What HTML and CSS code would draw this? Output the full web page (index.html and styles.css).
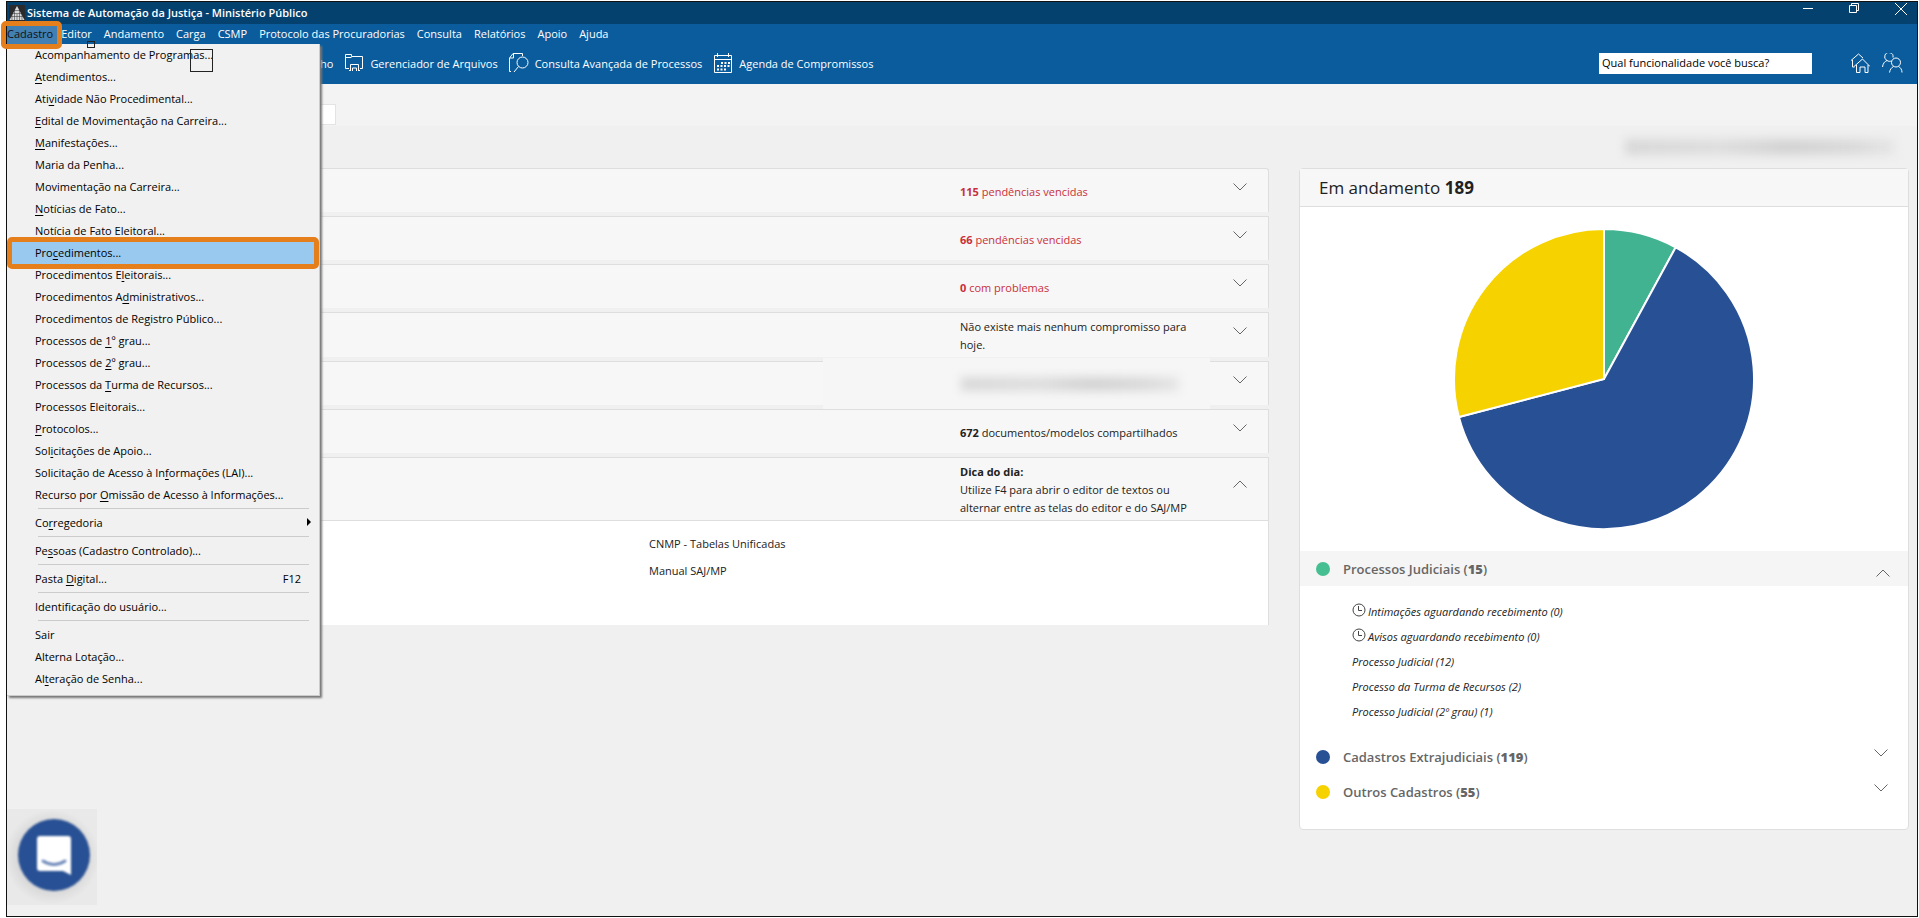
FILE: index.html
```html
<!DOCTYPE html>
<html lang="pt-BR">
<head>
    <meta charset="UTF-8">
    <meta name="viewport" content="width=device-width, initial-scale=1.0">
    <title>Sistema de Automação da Justiça - Ministério Público</title>
    <link rel="stylesheet" href="styles.css">
</head>
<body>
    <div class="window">
        <header class="titlebar">
            <svg class="logo" width="16" height="16" viewBox="0 0 16 16">
                <rect width="16" height="16" fill="#2b2b2e"/>
                <path d="M8 1L15.500 15H.5z" fill="#d8d8d8"/>
                <path d="M3 5.500h10M3 8.500h10M1 11.500h14M5.500 2v13M8 9v6M10.500 2v13M13 2v13M3 2v13" stroke="#2b2b2e" stroke-width=".5"/>
            </svg>
            <h1>Sistema de Automação da Justiça - Ministério Público</h1>
            <div class="window-buttons">
                <button aria-label="Minimizar"><svg width="12" height="14" viewBox="0 0 12 14"><path d="M1 6.500h10"/></svg></button>
                <button aria-label="Restaurar"><svg width="12" height="14" viewBox="0 0 12 14"><path d="M1.500 3.500h7v7h-7zM3.500 3.500v-2h7v7h-2"/></svg></button>
                <button aria-label="Fechar"><svg width="14" height="14" viewBox="0 0 14 14"><path d="M1 1l12 12M13 1L1 13"/></svg></button>
            </div>
        </header>

        <nav class="menubar">
            <div class="menu-root">
                <button class="active">Cadastro</button>
                <span class="mark mark-root"></span>
                <span class="handle handle-small"></span>
                <span class="handle handle-large"></span>
                <ul class="dropdown">
                    <li><button>Acompanhamento de Programas...</button></li>
                    <li><button><u>A</u>tendimentos...</button></li>
                    <li><button>Ati<u>v</u>idade Não Procedimental...</button></li>
                    <li><button><u>E</u>dital de Movimentação na Carreira...</button></li>
                    <li><button><u>M</u>anifestações...</button></li>
                    <li><button>Maria da Penha...</button></li>
                    <li><button>Movimentação na Carreira...</button></li>
                    <li><button><u>N</u>otícias de Fato...</button></li>
                    <li><button>Notícia de Fato <u>E</u>leitoral...</button></li>
                    <li class="selected"><button>Pro<u>c</u>edimentos...</button><span class="mark mark-item"></span></li>
                    <li><button>Procedimentos E<u>l</u>eitorais...</button></li>
                    <li><button>Procedimentos A<u>d</u>ministrativos...</button></li>
                    <li><button>Procedimentos de Re<u>g</u>istro Público...</button></li>
                    <li><button>Processos de <u>1</u>º grau...</button></li>
                    <li><button>Processos de <u>2</u>º grau...</button></li>
                    <li><button>Processos da <u>T</u>urma de Recursos...</button></li>
                    <li><button>Processos Eleitorais...</button></li>
                    <li><button><u>P</u>rotocolos...</button></li>
                    <li><button>Sol<u>i</u>citações de Apoio...</button></li>
                    <li><button>Solicitação de Acesso à In<u>f</u>ormações (LAI)...</button></li>
                    <li><button>Recurso por <u>O</u>missão de Acesso à Informações...</button></li>
                    <li class="separator"></li>
                    <li><button>Co<u>r</u>regedoria <svg class="submenu" width="4" height="8" viewBox="0 0 4 8"><path d="M0 0l4 4-4 4z"/></svg></button></li>
                    <li class="separator"></li>
                    <li><button>Pe<u>s</u>soas (Cadastro Controlado)...</button></li>
                    <li class="separator"></li>
                    <li><button>Pasta <u>D</u>igital... <span class="shortcut">F12</span></button></li>
                    <li class="separator"></li>
                    <li><button>Identificação do usuário...</button></li>
                    <li class="separator"></li>
                    <li><button>Sair</button></li>
                    <li><button>Alterna Lotação...</button></li>
                    <li><button>Al<u>t</u>eração de Senha...</button></li>
                </ul>
            </div>
            <button>Editor</button>
            <button>Andamento</button>
            <button>Carga</button>
            <button>CSMP</button>
            <button>Protocolo das Procuradorias</button>
            <button>Consulta</button>
            <button>Relatórios</button>
            <button>Apoio</button>
            <button>Ajuda</button>
        </nav>

        <div class="toolbar">
            <button>ho</button>
            <button>
                <svg width="20" height="20" viewBox="0 0 20 20"><path d="M5 15.500H1.500V1.500h6v2h11v12H16M1.500 4.500h6M6.500 18V11.500h8V18M8.500 18v-3h4v3M5 17.500h2M14 17.500h2"/></svg>
                Gerenciador de Arquivos
            </button>
            <button>
                <svg width="20" height="20" viewBox="0 0 20 20"><path d="M2 18.500H.5V5L4 .5h9.500V3M4.500 1v4H1"/><circle cx="13.500" cy="9.500" r="5.500"/><path d="M9.500 13.500L5 19"/></svg>
                Consulta Avançada de Processos
            </button>
            <button>
                <svg width="20" height="20" viewBox="0 0 20 20"><path d="M1.500 2.500h17v17h-17zM1.500 6.500h17M4.500 0v4M15.500 0v4"/><path d="M8 10h9M4 13h13M4 16.500h9" stroke-width="2" stroke-dasharray="2 1.500"/></svg>
                Agenda de Compromissos
            </button>
            <div class="toolbar-right">
                <input type="text" aria-label="Busca de funcionalidade" value="Qual funcionalidade você busca?">
                <button aria-label="Início"><svg width="20" height="20" viewBox="0 0 20 20"><path d="M1 7.500L8.500 1 13 5M2.500 7v7h2M4 13.500L12.500 6 20 13.500M6.500 12v7.500h3.500V14h5v5.500h3V12"/></svg></button>
                <button aria-label="Usuários"><svg width="21" height="20" viewBox="0 0 21 20"><circle cx="14" cy="9.500" r="4.500"/><path d="M7.500 19.500c.500-3 2-5 4-6M16.500 13.500c2 1 3.500 3 3.500 6M11 4.500A4.200 4.200 0 1 0 5 7.500M5 7.500C2.500 8.500 1 10.500.5 14M5 7.500c1.500 1 3 1 4.500.500"/></svg></button>
            </div>
        </div>

        <div class="subbar">
            <input type="text" aria-label="Lotação">
        </div>
        <div class="userline"><span class="redacted redacted-user"></span></div>

        <main class="content">
            <section class="panel">
                <div class="row alert">
                    <p><b>115</b> pendências vencidas</p>
                    <button aria-label="Expandir"><svg class="chevron" width="14" height="8" viewBox="0 0 14 8"><path d="M.5.5L7 7 13.500.5"/></svg></button>
                </div>
                <div class="row alert">
                    <p><b>66</b> pendências vencidas</p>
                    <button aria-label="Expandir"><svg class="chevron" width="14" height="8" viewBox="0 0 14 8"><path d="M.5.5L7 7 13.500.5"/></svg></button>
                </div>
                <div class="row alert">
                    <p><b>0</b> com problemas</p>
                    <button aria-label="Expandir"><svg class="chevron" width="14" height="8" viewBox="0 0 14 8"><path d="M.5.5L7 7 13.500.5"/></svg></button>
                </div>
                <div class="row">
                    <p>Não existe mais nenhum compromisso para hoje.</p>
                    <button aria-label="Expandir"><svg class="chevron" width="14" height="8" viewBox="0 0 14 8"><path d="M.5.5L7 7 13.500.5"/></svg></button>
                </div>
                <div class="row">
                    <div class="redacted-box"><span class="redacted"></span></div>
                    <button aria-label="Expandir"><svg class="chevron" width="14" height="8" viewBox="0 0 14 8"><path d="M.5.5L7 7 13.500.5"/></svg></button>
                </div>
                <div class="row">
                    <p><b>672</b> documentos/modelos compartilhados</p>
                    <button aria-label="Expandir"><svg class="chevron" width="14" height="8" viewBox="0 0 14 8"><path d="M.5.5L7 7 13.500.5"/></svg></button>
                </div>
                <div class="row open">
                    <p><b>Dica do dia:</b><br>Utilize F4 para abrir o editor de textos ou alternar entre as telas do editor e do SAJ/MP</p>
                    <button aria-label="Recolher"><svg class="chevron" width="14" height="8" viewBox="0 0 14 8"><path d="M.5 7.500L7 1l6.500 6.500"/></svg></button>
                </div>
                <div class="links">
                    <a href="#">CNMP - Tabelas Unificadas</a>
                    <a href="#">Manual SAJ/MP</a>
                </div>
            </section>

            <section class="card">
                <h2>Em andamento <b>189</b></h2>
                <svg class="pie" width="300" height="300" viewBox="-150 -150 300 300">
                    <path fill="#41b391" d="M0 0V-150A150 150 0 0 1 71.700-131.700z"/>
                    <path fill="#285094" d="M0 0L71.700-131.700A150 150 0 1 1-145.100 38z"/>
                    <path fill="#f5d200" d="M0 0L-145.100 38A150 150 0 0 1 0-150z"/>
                </svg>
                <div class="group expanded">
                    <span class="dot green"></span>
                    <h3>Processos Judiciais (<b>15</b>)</h3>
                    <button aria-label="Recolher"><svg class="chevron" width="14" height="8" viewBox="0 0 14 8"><path d="M.5 7.500L7 1l6.500 6.500"/></svg></button>
                </div>
                <ul class="processes">
                    <li><svg width="14" height="14" viewBox="0 0 14 14"><circle cx="7" cy="7" r="6"/><path d="M6.500 3v4.500H10"/></svg><a href="#">Intimações aguardando recebimento (0)</a></li>
                    <li><svg width="14" height="14" viewBox="0 0 14 14"><circle cx="7" cy="7" r="6"/><path d="M6.500 3v4.500H10"/></svg><a href="#">Avisos aguardando recebimento (0)</a></li>
                    <li><a href="#">Processo Judicial (12)</a></li>
                    <li><a href="#">Processo da Turma de Recursos (2)</a></li>
                    <li><a href="#">Processo Judicial (2º grau) (1)</a></li>
                </ul>
                <div class="group">
                    <span class="dot blue"></span>
                    <h3>Cadastros Extrajudiciais (<b>119</b>)</h3>
                    <button aria-label="Expandir"><svg class="chevron" width="14" height="8" viewBox="0 0 14 8"><path d="M.5.5L7 7 13.500.5"/></svg></button>
                </div>
                <div class="group">
                    <span class="dot yellow"></span>
                    <h3>Outros Cadastros (<b>55</b>)</h3>
                    <button aria-label="Expandir"><svg class="chevron" width="14" height="8" viewBox="0 0 14 8"><path d="M.5.5L7 7 13.500.5"/></svg></button>
                </div>
            </section>
        </main>

        <div class="chat">
            <button aria-label="Abrir chat">
                <svg width="76" height="76" viewBox="0 0 76 76">
                    <circle cx="38" cy="38" r="36" fill="#285094"/>
                    <path d="M24 19h28q3 0 3 3v36l-8-4H24q-3 0-3-3V22q0-3 3-3z" fill="#fff"/>
                    <path d="M27 44q11 7 22 0" fill="none" stroke="#6f8aba" stroke-width="3" stroke-linecap="round"/>
                </svg>
            </button>
        </div>
    </div>
</body>
</html>
```
FILE: styles.css
```css
* {
    box-sizing: border-box;
}

body {
    margin: 0;
    padding: 1px 1px 1px 6px;
    background-color: #fff;
    font-family: "Open Sans", "Noto Sans", sans-serif;
    font-size: 11px;
    color: #212121;
}

h1, h2, h3, p, ul {
    margin: 0;
    padding: 0;
}

ul {
    list-style: none;
}

button {
    padding: 0;
    border: none;
    background: none;
    font: inherit;
    color: inherit;
    cursor: pointer;
}

svg {
    display: block;
    flex: none;
}

a {
    color: inherit;
    text-decoration: none;
}

.window {
    position: relative;
    min-height: calc(100vh - 2px);
    border: 1px solid #111;
    background-color: #f0f0f0;
}

/* title bar */
.titlebar {
    display: flex;
    align-items: center;
    gap: 2px;
    height: 22px;
    padding-left: 2px;
    background-color: #05416f;
    color: #fff;
}

.titlebar h1 {
    padding-bottom: 1px;
    font-size: 11px;
    font-weight: 600;
}

.window-buttons {
    display: flex;
    align-items: center;
    gap: 34px;
    margin-left: auto;
    padding: 0 9px 8px 0;
}

.window-buttons path {
    fill: none;
    stroke: #fff;
}

/* menus */
.menubar {
    display: flex;
    gap: 12px;
    height: 20px;
    background-color: #0a5c9d;
    color: #fff;
}

.menubar button {
    padding-bottom: 2px;
}

.menu-root {
    position: relative;
    display: flex;
    margin-right: -8px;
}

.menu-root .active {
    padding-right: 4px;
    background-color: #427fb2;
    color: #111;
}

.dropdown {
    position: absolute;
    top: 100%;
    left: 0;
    z-index: 10;
    width: 313px;
    padding-bottom: 5px;
    border-right: 1px solid #ccc;
    border-bottom: 1px solid #ccc;
    background-color: #f1f1f1;
    box-shadow: 2px 2px 2px #777;
    color: #000;
}

.dropdown li {
    position: relative;
}

.dropdown button {
    display: flex;
    align-items: center;
    width: 100%;
    height: 22px;
    padding: 0 18px 2px 28px;
    white-space: pre;
    text-align: left;
}

.dropdown u {
    text-underline-offset: 2px;
}

.dropdown .selected {
    background-color: #99c9ef;
}

.dropdown .separator {
    height: 6px;
    margin: 0 10px 0 31px;
    border-top: 2px solid #f1f1f1;
    background: linear-gradient(#ccc, #ccc) 0 0 / 100% 1px no-repeat;
}

.shortcut {
    margin-left: auto;
}

.submenu {
    margin-left: auto;
    margin-right: -10px;
}

/* orange marks around the chosen entries */
.mark {
    position: absolute;
    z-index: 12;
    border: 5px solid #e57f1b;
    border-radius: 5px;
    pointer-events: none;
}

.mark-root {
    inset: -3px -5px -5px -6px;
}

.mark-item {
    inset: -5px 0;
}

.handle {
    position: absolute;
    z-index: 12;
    border: 1px solid #222;
}

.handle-small {
    top: 17px;
    left: 80px;
    width: 8px;
    height: 7px;
}

.handle-large {
    top: 25px;
    left: 183px;
    width: 23px;
    height: 23px;
}

/* toolbar */
.toolbar {
    display: flex;
    align-items: center;
    gap: 11px;
    height: 40px;
    padding: 0 14px 2px 313px;
    background-color: #0a5c9d;
    color: #fff;
    font-weight: 500;
}

.toolbar button {
    display: flex;
    align-items: center;
    gap: 6px;
    white-space: nowrap;
}

.toolbar path, .toolbar circle {
    fill: none;
    stroke: #fff;
}

.toolbar-right {
    display: flex;
    align-items: center;
    gap: 12px;
    margin-left: auto;
}

.toolbar-right input {
    width: 213px;
    height: 21px;
    margin-right: 26px;
    padding: 0 3px 2px;
    border: none;
    font: inherit;
    font-weight: 400;
    color: #000;
}

.subbar {
    height: 42px;
    padding: 20px 0 0 30px;
    background-color: #f3f3f3;
}

.subbar input {
    display: block;
    width: 299px;
    height: 21px;
    border: 1px solid #e3e3e3;
    background-color: #fff;
}

.userline {
    display: flex;
    justify-content: flex-end;
    height: 42px;
    padding: 13px 22px 0 0;
}

.redacted {
    width: 218px;
    height: 14px;
    background: linear-gradient(90deg, #d8d8d8, #dedede 35%, #d2d2d2 60%, #dadada 85%, #e6e6e6);
    filter: blur(5px);
}

.redacted-user {
    width: 270px;
    height: 16px;
}

/* dashboard */
.content {
    display: grid;
    grid-template-columns: minmax(0, 1fr) 610px;
    gap: 30px;
    align-items: start;
    padding: 0 8px 0 20px;
}

.row {
    display: flex;
    justify-content: flex-end;
    align-items: center;
    gap: 23px;
    min-height: 44px;
    margin-bottom: 4px;
    padding-right: 21px;
    border: 1px solid #dedede;
    border-bottom: none;
    background-color: #f7f7f7;
}

.row:first-child {
    border-radius: 3px 3px 0 0;
}

.row p {
    width: 250px;
    padding: 5px 0 3px;
    line-height: 18px;
}

.row button {
    padding-bottom: 8px;
}

.alert {
    color: #c92f3b;
}

.row.open {
    min-height: 63px;
    margin-bottom: 0;
}

.row.open button {
    padding-bottom: 10px;
}

.chevron path {
    fill: none;
    stroke: #666;
}

.redacted-box {
    display: flex;
    justify-content: flex-end;
    align-items: center;
    width: 387px;
    height: 51px;
    margin: -4px 0;
    padding-right: 31px;
    background-color: #f6f6f6;
}

.links {
    display: flex;
    flex-direction: column;
    gap: 9px;
    min-height: 105px;
    padding: 14px 0 0 50%;
    border: 1px solid #dedede;
    border-bottom: none;
    background-color: #fff;
    line-height: 18px;
}

.card {
    padding-bottom: 20px;
    border: 1px solid #dedede;
    border-radius: 4px;
    background-color: #fff;
}

.card h2 {
    padding: 0 19px;
    border-bottom: 1px solid #dedede;
    background-color: #f7f7f7;
    font-size: 17px;
    font-weight: 400;
    line-height: 37px;
}

.pie {
    margin: 22px auto;
}

.pie path {
    stroke: #fff;
    stroke-width: 2;
}

.group {
    display: flex;
    align-items: center;
    gap: 13px;
    height: 35px;
    padding: 0 20px 0 16px;
    color: #666;
}

.group.expanded {
    background-color: #f5f5f5;
}

.group h3 {
    font-size: 13px;
    font-weight: 600;
}

.group b {
    font-weight: 800;
}

.group button {
    margin-left: auto;
    padding-bottom: 8px;
}

.group.expanded button {
    margin-right: -2px;
    padding: 8px 0 0;
}

.dot {
    width: 14px;
    height: 14px;
    border-radius: 50%;
}

.green {
    background-color: #45be92;
}

.blue {
    background-color: #285094;
}

.yellow {
    background-color: #f5d200;
}

.processes {
    padding: 13px 0 15px 52px;
    font-style: italic;
    line-height: 25px;
}

.processes li {
    display: flex;
    align-items: center;
    gap: 2px;
}

.processes svg {
    margin-bottom: 4px;
    fill: none;
    stroke: #444;
}

/* chat launcher */
.chat {
    position: absolute;
    left: 0;
    bottom: 11px;
    padding: 8px 5px 12px 9px;
    background: radial-gradient(circle, #cfcfcf 40%, #e9e9e9 72%);
}

.chat button {
    display: block;
}

.chat svg {
    filter: blur(1px);
}
```
